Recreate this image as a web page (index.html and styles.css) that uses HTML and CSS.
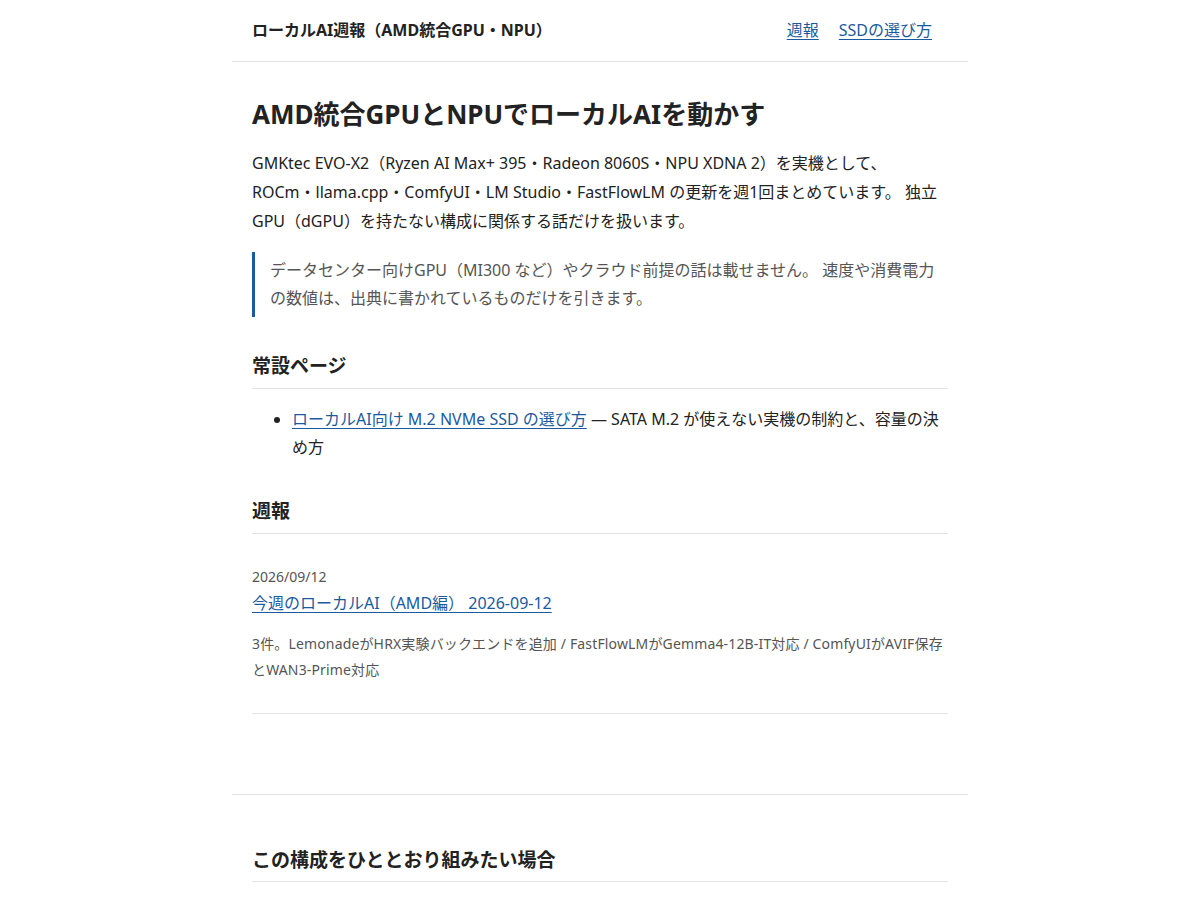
FILE: index.html
```html
<!DOCTYPE html>
<html lang="ja">
<head>
<meta charset="utf-8">
<title>ローカルAI週報（AMD統合GPU・NPU）</title>
<link rel="stylesheet" href="styles.css">
</head>
<body>
<div class="wrap">
  <header class="site-header">
    <div class="site-title">ローカルAI週報（AMD統合GPU・NPU）</div>
    <nav class="site-nav">
      <a href="#">週報</a>
      <a href="#">SSDの選び方</a>
    </nav>
  </header>
  <main class="main">
    <h1 class="title">AMD統合GPUとNPUでローカルAIを動かす</h1>
    <p class="lead">GMKtec EVO-X2（Ryzen AI Max+ 395・Radeon 8060S・NPU XDNA 2）を実機として、 ROCm・llama.cpp・ComfyUI・LM Studio・FastFlowLM の更新を週1回まとめています。 独立GPU（dGPU）を持たない構成に関係する話だけを扱います。</p>
    <blockquote class="note">データセンター向けGPU（MI300 など）やクラウド前提の話は載せません。 速度や消費電力の数値は、出典に書かれているものだけを引きます。</blockquote>

    <h2 class="section">常設ページ</h2>
    <ul class="pages">
      <li><a href="#">ローカルAI向け M.2 NVMe SSD の選び方</a> — SATA M.2 が使えない実機の制約と、容量の決め方</li>
    </ul>

    <h2 class="section">週報</h2>
    <article class="post">
      <div class="post-date">2026/09/12</div>
      <a class="post-link" href="#">今週のローカルAI（AMD編） 2026-09-12</a>
      <p class="post-summary">3件。LemonadeがHRX実験バックエンドを追加 / FastFlowLMがGemma4-12B-IT対応 / ComfyUIがAVIF保存とWAN3-Prime対応</p>
    </article>
  </main>
  <footer class="site-footer">
    <h2 class="section section-footer">この構成をひととおり組みたい場合</h2>
  </footer>
</div>
</body>
</html>
```

FILE: styles.css
```css
html, body {
  margin: 0;
  padding: 0;
  background: #fff;
}
body {
  font-family: "Noto Sans", "Noto Sans CJK JP", sans-serif;
  color: #222;
  font-size: 16px;
  line-height: 1.8;
}
a {
  color: #1a5a9e;
  text-decoration: underline;
  text-underline-offset: 3px;
}
.wrap {
  width: 736px;
  margin: 0 auto;
}
.site-header {
  display: flex;
  justify-content: space-between;
  align-items: center;
  height: 61px;
  padding: 0 36px 0 20px;
  border-bottom: 1px solid #e3e3e3;
}
.site-title {
  font-weight: 700;
  font-size: 16px;
}
.site-nav {
  display: flex;
  gap: 20px;
  font-size: 16px;
}
.main {
  padding: 22px 20px 80px;
}
.title {
  font-size: 26px;
  font-weight: 700;
  line-height: 1.4;
  margin: 12px 0 17px;
}
.lead {
  margin: 0 0 16px;
  font-size: 16px;
  line-height: 29px;
}
.note {
  margin: 0 0 35px;
  padding: 4px 0 5px 15px;
  border-left: 3px solid #1a5a9e;
  color: #555;
  line-height: 28px;
}
.section {
  font-size: 19px;
  font-weight: 700;
  line-height: 28px;
  margin: 0 0 16px;
  padding-bottom: 8px;
  border-bottom: 1px solid #e3e3e3;
}
.section-footer {
  padding-bottom: 7px;
}
.pages {
  margin: 0 0 36px;
  padding-left: 40px;
  line-height: 28px;
}
.post {
  padding: 17px 0 30px;
  border-bottom: 1px solid #e3e3e3;
}
.post-date {
  font-size: 14px;
  color: #555;
  line-height: 20px;
}
.post-link {
  display: inline-block;
  font-size: 16px;
  line-height: 30px;
  margin-top: 1px;
}
.post-summary {
  margin: 13px 0 0;
  font-size: 14px;
  letter-spacing: 0.15px;
  color: #555;
  line-height: 26px;
}
.site-footer {
  border-top: 1px solid #e3e3e3;
  padding: 51px 20px 0;
}
```
